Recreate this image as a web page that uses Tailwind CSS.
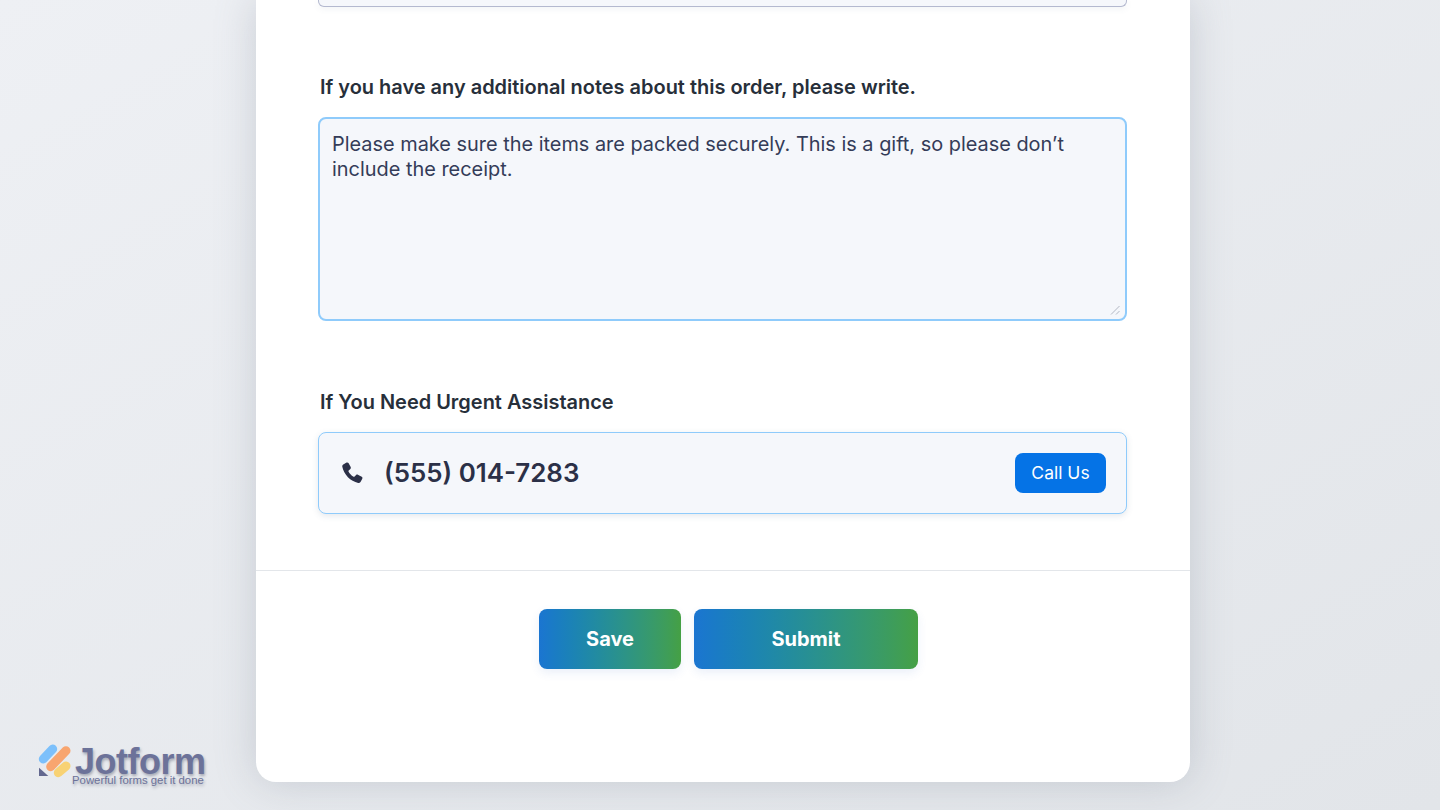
<!DOCTYPE html>
<html lang="en">
<head>
    <meta charset="UTF-8">
    <meta name="viewport" content="width=device-width, initial-scale=1.0">
    <title>Order Form</title>
    <script src="https://cdn.jsdelivr.net/npm/@tailwindcss/browser@4"></script>
</head>
<body class="h-[810px] overflow-hidden bg-gradient-to-br from-[#eef0f4] to-[#e2e5e9] font-['Inter',sans-serif]">

    <div class="relative h-[810px] overflow-hidden">
        <!-- Form card -->
        <div class="ml-[256px] w-[934px] h-[782px] flex flex-col bg-white rounded-b-[20px] shadow-[0_0_40px_rgba(120,130,145,0.3)]">

            <div class="h-[571px] border-b border-[#e3e6ea] pl-[62px] pr-[63px]">
                <!-- Previous field, scrolled off the top -->
                <div class="h-[7px] bg-[#f5f7fb] border border-t-0 border-[#b4b9cf] rounded-b-[6px] shadow-[0_2px_6px_rgba(80,100,130,0.08)]"></div>

                <label class="block mt-[68px] ml-[2px] text-[19.97px] leading-[24px] font-semibold text-[#272f3a]">If you have any additional notes about this order, please write.</label>
                <div class="relative mt-[18px] h-[204px] px-[12px] pt-[13px] bg-[#f5f7fb] border-2 border-[#8fcbfb] rounded-[8px] text-[19.92px] leading-[25px] text-[#343c58]">
                    Please make sure the items are packed securely. This is a gift, so please don’t include the receipt.
                    <svg class="absolute right-[4px] bottom-[3px]" width="12" height="12" viewBox="0 0 12 12" fill="none" stroke="#b3b8c4" stroke-width="1">
                        <path d="M2 10.5 10.5 2M7 10.5 10.5 7"/>
                    </svg>
                </div>

                <label class="block mt-[69px] ml-[2px] text-[19.97px] leading-[24px] font-semibold text-[#272f3a]">If You Need Urgent Assistance</label>
                <div class="mt-[18px] h-[82px] pl-[21px] pr-[20px] flex items-center bg-[#f5f7fb] border border-[#8fcbfb] rounded-[8px] shadow-[0_2px_6px_rgba(80,100,130,0.15)]">
                    <svg class="w-[24px] h-[24px]" viewBox="0 0 24 24" fill="#2b3047">
                        <path d="M3.200 3.600 6.600 1.600c.7-.4 1.500-.2 1.900.5l2.200 4c.3.6.2 1.300-.3 1.800L8.700 9.400c-.3.3-.4.7-.2 1.100.9 1.800 2.800 4 5 5.200.4.2.8.1 1.100-.2l1.500-1.500c.5-.5 1.200-.6 1.800-.3l3.800 2.100c.7.4.9 1.200.6 1.900l-1.800 3.200c-.5.8-1.400 1.200-2.300 1C10.500 20.500 3.800 13.500 2.300 5.800c-.2-.9.2-1.700.9-2.200Z"/>
                    </svg>
                    <span class="ml-[20px] text-[25.9px] leading-[34px] font-semibold text-[#2b3047]">(555) 014-7283</span>
                    <button class="ml-auto w-[91px] h-[40px] pt-[1px] bg-[#0573e6] text-white text-[17.5px] rounded-[8px]">Call Us</button>
                </div>
            </div>

            <!-- Actions -->
            <div class="pt-[38px] pl-[11px] flex justify-center gap-[13px]">
                <button class="w-[142px] h-[60px] rounded-[8px] bg-gradient-to-r from-[#1b75d1] to-[#45a044] text-white text-[20px] font-bold shadow-[0_4px_10px_rgba(60,110,200,0.1)]">Save</button>
                <button class="w-[224px] h-[60px] rounded-[8px] bg-gradient-to-r from-[#1b75d1] to-[#45a044] text-white text-[20px] font-bold shadow-[0_4px_10px_rgba(60,110,200,0.1)]">Submit</button>
            </div>
        </div>

        <!-- Badge over the page background -->
        <div class="absolute left-[38px] top-[744px] flex items-start">
            <svg class="w-[34px] h-[36px]" viewBox="0 0 34 36" fill="none" stroke-linecap="round" stroke-width="9">
                <path d="M5.300 15 14.700 5" stroke="#7cc0fb"/>
                <path d="M12.700 22.700 28 6.700" stroke="#f8a56f"/>
                <path d="M20.300 28.700 28 22" stroke="#f8d274"/>
                <path d="M1 23.700 10.300 32H1Z" fill="#63688f"/>
            </svg>
            <div class="font-['Liberation_Sans',sans-serif] text-[#6c7299] [text-shadow:1px_2px_3px_rgba(60,65,90,0.4)]">
                <div class="ml-[3px] h-[26px] text-[36px] leading-[36px] font-bold tracking-[-0.5px]">Jotform</div>
                <div class="mt-[4px] text-[11.35px] leading-[12px] whitespace-nowrap">Powerful forms get it done</div>
            </div>
        </div>
    </div>

</body>
</html>
